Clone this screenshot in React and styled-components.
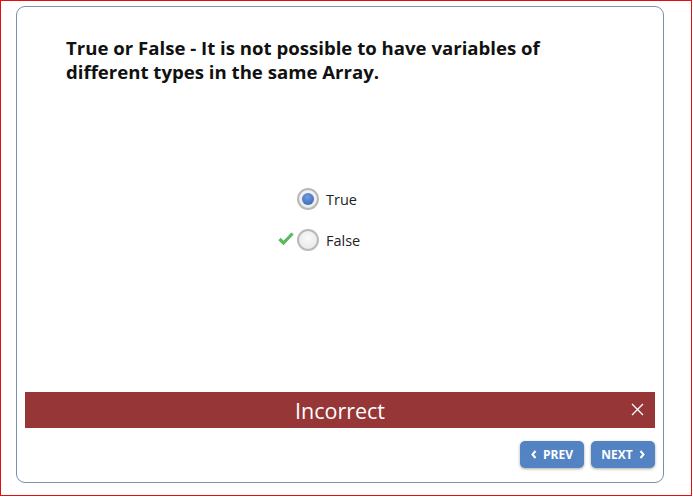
import React from "react";
import styled, { createGlobalStyle } from "styled-components";

const Global = createGlobalStyle`
  html, body { margin: 0; padding: 0; background: #fff; }
  body { font-family: "Open Sans", "Liberation Sans", sans-serif; }
`;

const Frame = styled.div`
  box-sizing: border-box;
  width: 692px;
  height: 496px;
  border: 1px solid #e01010;
  padding: 5px 28px 0 15px;
`;

const Card = styled.div`
  box-sizing: border-box;
  width: 648px;
  height: 477px;
  border: 1px solid #7891ad;
  border-radius: 9px;
  display: flex;
  flex-direction: column;
  padding: 0 8px;
`;

const Title = styled.h1`
  margin: 29px 0 0 41px;
  font-size: 18.6px;
  line-height: 24px;
  font-weight: 700;
  color: #111;
  width: 520px;
`;

const Options = styled.div`
  margin-top: 104px;
  display: flex;
  flex-direction: column;
  align-items: flex-start;
  padding-left: 272px;
  gap: 19px;
`;

const Option = styled.label`
  display: flex;
  align-items: center;
  gap: 7px;
  font-size: 14.5px;
  color: #222;
  height: 22px;
  position: relative;
`;

const Radio = styled.span`
  box-sizing: border-box;
  width: 22px;
  height: 22px;
  border-radius: 50%;
  border: 2px solid #b9b9b9;
  background: radial-gradient(circle at 50% 40%, #fafafa, #e4e4e4);
  display: flex;
  align-items: center;
  justify-content: center;
  &::after {
    content: "";
    display: ${(p) => (p.$checked ? "block" : "none")};
    width: 12px;
    height: 12px;
    border-radius: 50%;
    background: radial-gradient(circle at 45% 35%, #6f9be0, #2f5fb0);
  }
`;

const Check = styled.svg`
  position: absolute;
  left: -19px;
  top: 3px;
`;

const Spacer = styled.div`
  flex: 1;
`;

const Banner = styled.div`
  height: 36px;
  background: #963636;
  color: #fff;
  display: flex;
  align-items: center;
  justify-content: center;
  font-size: 21.5px;
  position: relative;
`;

const Close = styled.span`
  position: absolute;
  right: 11px;
  top: 11px;
  width: 13px;
  height: 13px;
  display: flex;
`;

const Nav = styled.div`
  display: flex;
  justify-content: flex-end;
  gap: 7px;
  margin: 13px 0 14px;
`;

const NavButton = styled.button`
  box-sizing: border-box;
  width: 64px;
  height: 27px;
  border: none;
  border-radius: 5px;
  background: #5383c3;
  box-shadow: 0 1px 3px rgba(0, 0, 0, 0.35);
  color: #fff;
  font-family: "Open Sans", sans-serif;
  font-weight: 700;
  font-size: 12px;
  display: flex;
  align-items: center;
  justify-content: center;
  gap: 6px;
  padding: 0;
`;

const Chevron = ({ dir }) => (
  <svg width="6" height="9" viewBox="0 0 6 9">
    <path
      d={dir === "left" ? "M4.5 1 L1.5 4.5 L4.5 8" : "M1.5 1 L4.5 4.5 L1.5 8"}
      stroke="#fff"
      strokeWidth="2"
      fill="none"
    />
  </svg>
);

export default function App() {
  return (
    <>
      <Global />
      <Frame>
        <Card>
          <Title>
            True or False - It is not possible to have variables of different
            types in the same Array.
          </Title>
          <Options>
            <Option>
              <Radio $checked />
              True
            </Option>
            <Option>
              <Check width="16" height="13" viewBox="0 0 16 13">
                <path
                  d="M1.5 7 L5.5 11 L14.5 1.5"
                  stroke="#5cb85c"
                  strokeWidth="3.2"
                  fill="none"
                />
              </Check>
              <Radio />
              False
            </Option>
          </Options>
          <Spacer />
          <Banner>
            Incorrect
            <Close>
              <svg width="13" height="13" viewBox="0 0 13 13">
                <path d="M1 1 L12 12 M12 1 L1 12" stroke="#fff" strokeWidth="1.3" />
              </svg>
            </Close>
          </Banner>
          <Nav>
            <NavButton>
              <Chevron dir="left" />
              PREV
            </NavButton>
            <NavButton>
              NEXT
              <Chevron dir="right" />
            </NavButton>
          </Nav>
        </Card>
      </Frame>
    </>
  );
}
